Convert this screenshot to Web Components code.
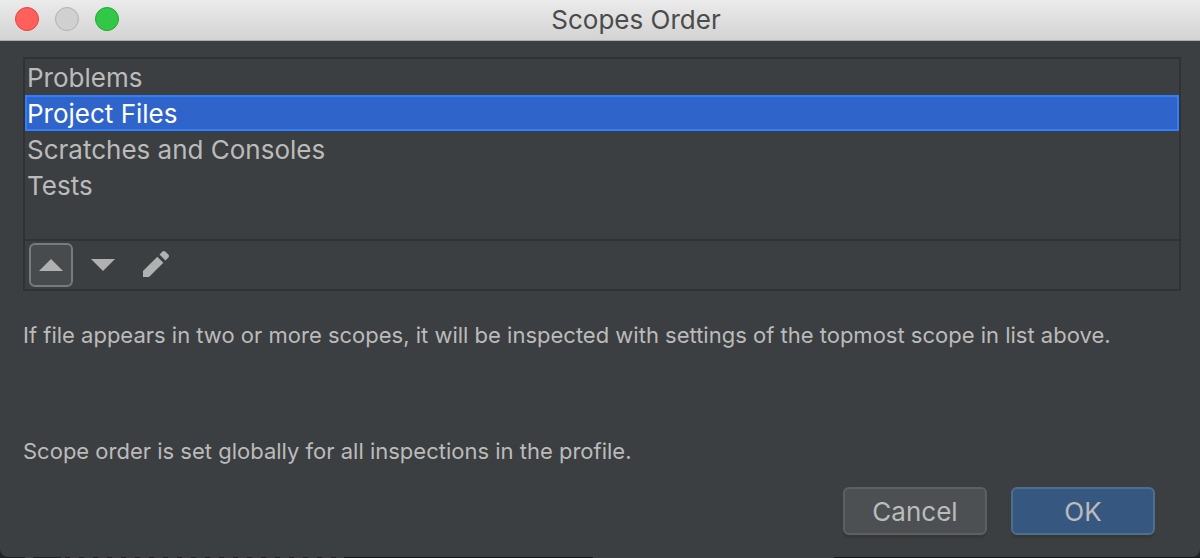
<!DOCTYPE html>
<html lang="en">
<head>
<meta charset="utf-8">
<title>Scopes Order</title>
<style>
  html { background: #202124; }
  body { margin: 0; font-family: Inter, "Liberation Sans", sans-serif; }
</style>
</head>
<body>
<dialog-window heading="Scopes Order">
  <scope-panel>
    <scope-list slot="list">
      <scope-item>Problems</scope-item>
      <scope-item selected>Project Files</scope-item>
      <scope-item>Scratches and Consoles</scope-item>
      <scope-item>Tests</scope-item>
    </scope-list>
    <tool-button slot="tools" label="Move up" icon="up" active></tool-button>
    <tool-button slot="tools" label="Move down" icon="down"></tool-button>
    <tool-button slot="tools" label="Edit" icon="edit"></tool-button>
  </scope-panel>
  <dialog-note>If file appears in two or more scopes, it will be inspected with settings of the topmost scope in list above.</dialog-note>
  <dialog-note>Scope order is set globally for all inspections in the profile.</dialog-note>
  <push-button slot="actions">Cancel</push-button>
  <push-button slot="actions" primary>OK</push-button>
</dialog-window>

<script>
const define = (name, html, setup) => {
  const template = document.createElement('template');
  template.innerHTML = html;
  customElements.define(name, class extends HTMLElement {
    constructor() {
      super();
      this.attachShadow({ mode: 'open' }).append(template.content.cloneNode(true));
    }
    connectedCallback() { if (setup) setup(this, this.shadowRoot); }
  });
};

define('window-controls', `
  <style>
    :host { display: flex; gap: 16px; }
    button { width: 24px; height: 24px; padding: 0; border: 1px solid; border-radius: 50%; box-sizing: border-box; }
    .close { background: #ff605c; border-color: #e2463f; }
    .minimize { background: #d0d0d0; border-color: #b2b2b2; }
    .zoom { background: #33c748; border-color: #1fa832; }
  </style>
  <button class="close" aria-label="Close"></button>
  <button class="minimize" aria-label="Minimize" disabled></button>
  <button class="zoom" aria-label="Zoom"></button>
`);

define('dialog-window', `
  <style>
    :host { display: flex; flex-direction: column; min-height: 100vh; box-sizing: border-box; padding-bottom: 1px;
      background: linear-gradient(90deg, #202124 0 25px, #4a4442 25px 33px, #202124 33px 61px, transparent 61px 344px, #17171a 344px 593px, #3c3f41 593px 834px, #17171a 834px) bottom / 100% 1px no-repeat,
        repeating-linear-gradient(90deg, #443c3a 0 9px, #202124 9px 14px) bottom / 100% 1px no-repeat; }
    header { display: flex; align-items: center; height: 41px; box-sizing: border-box;
      padding: 0 47px 0 15px; background: linear-gradient(#ebebeb, #d3d3d3); border-bottom: 1px solid #adadad; }
    window-controls { margin-bottom: 2px; }
    h1 { flex: 1; margin: 0; text-align: center; font-size: 26px; line-height: 40px; font-weight: 400; color: #4b4b4b; }
    main { flex: 1; display: flex; flex-direction: column; padding: 16px 19px 22px 23px; background: #3c3f41;
      border-radius: 0 0 8px 8px; }
    footer { display: flex; justify-content: flex-end; gap: 24px; margin-top: auto; padding-right: 26px; }
  </style>
  <header><window-controls></window-controls><h1></h1></header>
  <main>
    <slot></slot>
    <footer><slot name="actions"></slot></footer>
  </main>
`, (host, root) => { root.querySelector('h1').textContent = host.getAttribute('heading'); });

define('scope-panel', `
  <style>
    :host { display: block; border: 2px solid #323232; margin-bottom: 30px; }
    .tools { display: flex; align-items: center; gap: 8px; padding: 2px 4px; border-top: 2px solid #323232; }
  </style>
  <slot name="list"></slot>
  <div class="tools" role="toolbar" aria-label="Scope actions"><slot name="tools"></slot></div>
`);

define('scope-list', `
  <style>
    :host { display: block; min-height: 180px; }
  </style>
  <slot></slot>
`, host => { host.setAttribute('role', 'listbox'); host.setAttribute('aria-label', 'Scopes'); });

define('scope-item', `
  <style>
    :host { display: block; height: 36px; box-sizing: border-box; border: 2px solid transparent;
      font-size: 26px; line-height: 34px; color: #bbbbbb; cursor: default; }
    :host([selected]) { background: #2f65ca; border-color: #2f7fff; color: #ffffff; }
  </style>
  <slot></slot>
`, host => {
  host.setAttribute('role', 'option');
  host.setAttribute('aria-selected', String(host.hasAttribute('selected')));
});

const icons = {
  up: '<path d="M10 28h24L22 16z"/>',
  down: '<path d="M10 16h24L22 28z"/>',
  edit: '<path d="M10 34v-6L24.300 13.700l6 6L16 34z"/><path d="M26.500 11.500l2.800-2.800q1.400-1.400 3.200 0l2.900 2.900q1.200 1.400 0 2.900l-2.900 2.900z"/>'
};

define('tool-button', `
  <style>
    :host { display: block; }
    button { display: block; width: 44px; height: 44px; padding: 0; border: 2px solid transparent; border-radius: 6px; background: none; }
    :host([active]) button { background: #484b4d; border-color: #777b80; }
    svg { display: block; width: 44px; height: 44px; margin: -2px; fill: #afb1b3; }
  </style>
  <button></button>
`, (host, root) => {
  const button = root.querySelector('button');
  button.setAttribute('aria-label', host.getAttribute('label'));
  button.innerHTML = '<svg viewBox="0 0 44 44" aria-hidden="true">' + icons[host.getAttribute('icon')] + '</svg>';
});

define('dialog-note', `
  <style>
    :host { display: block; margin-bottom: 88px; }
    :host(:last-of-type) { margin-bottom: 22px; }
    p { margin: 0; font-size: 22px; line-height: 28px; color: #bbbbbb; }
  </style>
  <p><slot></slot></p>
`);

define('push-button', `
  <style>
    :host { display: block; }
    button { display: block; min-width: 144px; height: 48px; padding: 2px 16px 0; box-sizing: border-box; border: 2px solid #5e6060;
      border-radius: 6px; background: #4c5052; box-shadow: 0 3px 1px #36383a; color: #bbbbbb; font: 26px/42px Inter, "Liberation Sans", sans-serif; }
    :host([primary]) button { background: #365880; border-color: #4c708c; }
  </style>
  <button><slot></slot></button>
`);
</script>
</body>
</html>
